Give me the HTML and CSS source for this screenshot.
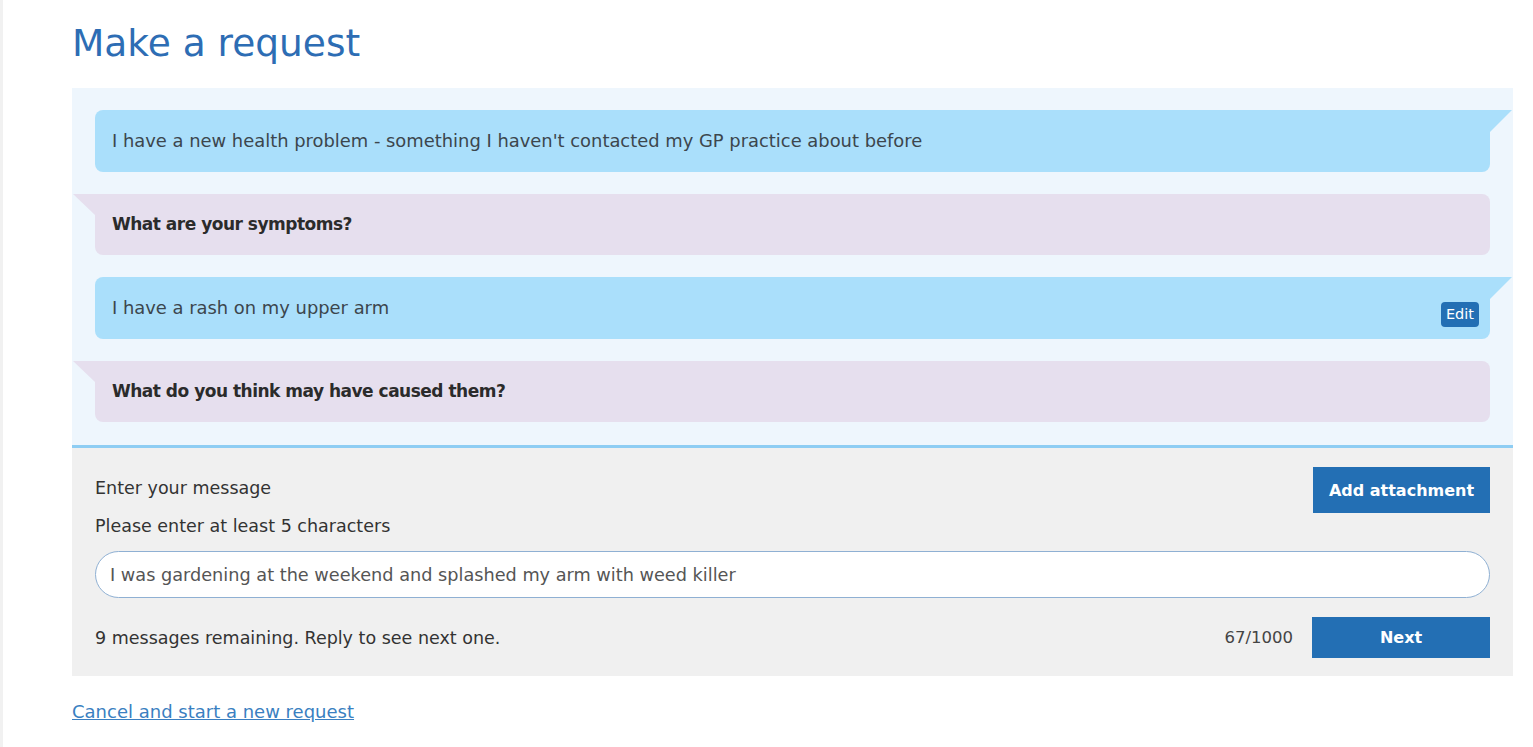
FILE: index.html
```html
<!DOCTYPE html>
<html lang="en">
<head>
<meta charset="utf-8">
<title>Make a request</title>
<link rel="stylesheet" href="styles.css">
</head>
<body>
<div class="page">
  <h1 class="title">Make a request</h1>
  <div class="chat">
    <div class="bubble bubble-user">
      <span>I have a new health problem - something I haven't contacted my GP practice about before</span>
    </div>
    <div class="bubble bubble-question">
      <span>What are your symptoms?</span>
    </div>
    <div class="bubble bubble-user">
      <span>I have a rash on my upper arm</span>
      <button class="edit-btn" type="button">Edit</button>
    </div>
    <div class="bubble bubble-question">
      <span>What do you think may have caused them?</span>
    </div>
  </div>
  <div class="composer">
    <div class="composer-top">
      <label class="composer-label" for="msg">Enter your message</label>
      <button class="btn btn-attach" type="button">Add attachment</button>
    </div>
    <div class="composer-hint">Please enter at least 5 characters</div>
    <input class="composer-input" id="msg" type="text" value="I was gardening at the weekend and splashed my arm with weed killer">
    <div class="composer-bottom">
      <span class="remaining">9 messages remaining. Reply to see next one.</span>
      <div class="composer-actions">
        <span class="counter">67/1000</span>
        <button class="btn btn-next" type="button">Next</button>
      </div>
    </div>
  </div>
  <a class="cancel-link" href="#">Cancel and start a new request</a>
</div>
</body>
</html>
```
FILE: styles.css
```css
* { box-sizing: border-box; }
html, body { margin: 0; padding: 0; background: #ffffff; }
body {
  font-family: "DejaVu Sans", "Open Sans", sans-serif;
  color: #333333;
}
.page {
  min-height: 747px;
  border-left: 3px solid #f1f1f1;
  padding: 0 20px 0 69px;
}
.title {
  margin: 0;
  padding: 20px 0 22px;
  font-size: 37.5px;
  line-height: 46px;
  font-weight: 400;
  color: #2d6db4;
}
.chat {
  width: 1441px;
  background: #eef6fd;
  padding: 22px 23px 23px 23px;
  border-bottom: 3px solid #8ecdf3;
  display: flex;
  flex-direction: column;
  gap: 22px;
}
.bubble {
  position: relative;
  display: flex;
  align-items: center;
  justify-content: space-between;
  min-height: 61.5px;
  padding: 0 11px 0 17px;
  font-size: 17.9px;
  line-height: 26px;
  border-radius: 8px;
}
.bubble-user {
  background: #aadffb;
  color: #3c464d;
  border-top-right-radius: 0;
}
.bubble-user::after {
  content: "";
  position: absolute;
  top: 0;
  right: -22px;
  width: 0;
  height: 0;
  border-top: 22px solid #aadffb;
  border-right: 22px solid transparent;
}
.bubble-question {
  background: #e6dfee;
  color: #2b2b2b;
  font-weight: 700;
  font-size: 17px;
  letter-spacing: -0.5px;
  border-top-left-radius: 0;
}
.bubble-question::before {
  content: "";
  position: absolute;
  top: 0;
  left: -22px;
  width: 0;
  height: 0;
  border-top: 21px solid #e6dfee;
  border-left: 22px solid transparent;
}
.edit-btn {
  margin-top: 13px;
  height: 25px;
  padding: 0 5px;
  border: 0;
  border-radius: 4px;
  background: #236fb4;
  color: #ffffff;
  font-family: inherit;
  font-size: 14.5px;
  font-weight: 400;
  line-height: 25px;
  cursor: pointer;
}
.composer {
  width: 1441px;
  background: #f0f0f0;
  padding: 19px 23px 18px 23px;
}
.composer-top {
  display: flex;
  align-items: center;
  justify-content: space-between;
  height: 46px;
}
.composer-label {
  font-size: 17.5px;
  line-height: 24px;
  color: #333333;
  margin-top: -4px;
}
.composer-hint {
  margin-top: 1px;
  font-size: 17.5px;
  line-height: 24px;
  color: #333333;
}
.btn {
  border: 0;
  background: #236fb4;
  color: #ffffff;
  font-family: inherit;
  font-size: 16px;
  font-weight: 700;
  cursor: pointer;
}
.btn-attach {
  width: 177px;
  height: 46px;
}
.composer-input {
  display: block;
  width: 100%;
  height: 47px;
  margin-top: 13px;
  padding: 0 14px;
  border: 1px solid #8fb0d3;
  border-radius: 24px;
  background: #ffffff;
  font-family: inherit;
  font-size: 17.7px;
  color: #555555;
  outline: none;
}
.composer-bottom {
  display: flex;
  align-items: center;
  justify-content: space-between;
  margin-top: 19px;
}
.remaining {
  font-size: 17.5px;
  line-height: 24px;
  color: #333333;
}
.composer-actions {
  display: flex;
  align-items: center;
  gap: 19px;
}
.counter {
  font-size: 16.5px;
  color: #444444;
}
.btn-next {
  width: 178px;
  height: 41px;
}
.cancel-link {
  display: inline-block;
  margin-top: 23px;
  font-size: 18px;
  line-height: 26px;
  color: #3a7fc1;
  text-decoration: underline;
}
```
